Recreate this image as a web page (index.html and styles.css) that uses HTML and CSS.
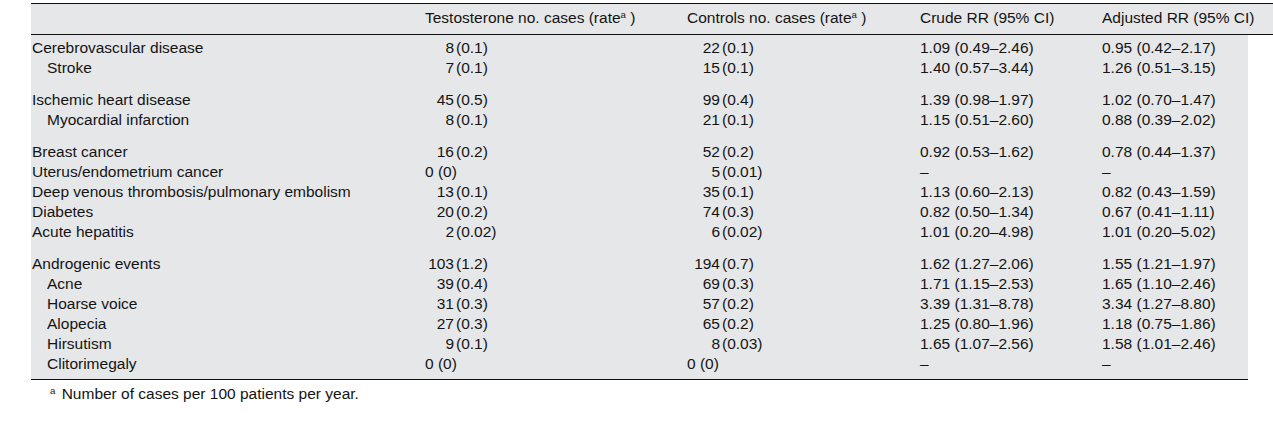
FILE: index.html
```html
<!DOCTYPE html>
<html lang="en">
<head>
<meta charset="utf-8">
<title>Adverse events table</title>
<link rel="stylesheet" href="styles.css">
</head>
<body>
<div class="wrap">
<table class="events">
  <colgroup>
    <col class="c-label">
    <col class="c-testo">
    <col class="c-ctrl">
    <col class="c-crude">
    <col class="c-adj">
    <col class="c-pad">
  </colgroup>
  <thead>
    <tr>
      <th></th>
      <th>Testosterone no. cases (rate<sup>a</sup> )</th>
      <th>Controls no. cases (rate<sup>a</sup> )</th>
      <th>Crude RR (95% CI)</th>
      <th>Adjusted RR (95% CI)</th>
      <th class="pad"></th>
    </tr>
  </thead>
  <tbody>
    <tr class="first">
      <td>Cerebrovascular disease</td>
      <td><span class="nt">8</span>(0.1)</td>
      <td><span class="nc">22</span>(0.1)</td>
      <td>1.09 (0.49–2.46)</td>
      <td>0.95 (0.42–2.17)</td>
      <td class="pad"></td>
    </tr>
    <tr>
      <td class="sub">Stroke</td>
      <td><span class="nt">7</span>(0.1)</td>
      <td><span class="nc">15</span>(0.1)</td>
      <td>1.40 (0.57–3.44)</td>
      <td>1.26 (0.51–3.15)</td>
      <td class="pad"></td>
    </tr>
    <tr class="gap">
      <td>Ischemic heart disease</td>
      <td><span class="nt">45</span>(0.5)</td>
      <td><span class="nc">99</span>(0.4)</td>
      <td>1.39 (0.98–1.97)</td>
      <td>1.02 (0.70–1.47)</td>
      <td class="pad"></td>
    </tr>
    <tr>
      <td class="sub">Myocardial infarction</td>
      <td><span class="nt">8</span>(0.1)</td>
      <td><span class="nc">21</span>(0.1)</td>
      <td>1.15 (0.51–2.60)</td>
      <td>0.88 (0.39–2.02)</td>
      <td class="pad"></td>
    </tr>
    <tr class="gap">
      <td>Breast cancer</td>
      <td><span class="nt">16</span>(0.2)</td>
      <td><span class="nc">52</span>(0.2)</td>
      <td>0.92 (0.53–1.62)</td>
      <td>0.78 (0.44–1.37)</td>
      <td class="pad"></td>
    </tr>
    <tr>
      <td>Uterus/endometrium cancer</td>
      <td>0 (0)</td>
      <td><span class="nc">5</span>(0.01)</td>
      <td>–</td>
      <td>–</td>
      <td class="pad"></td>
    </tr>
    <tr>
      <td>Deep venous thrombosis/pulmonary embolism</td>
      <td><span class="nt">13</span>(0.1)</td>
      <td><span class="nc">35</span>(0.1)</td>
      <td>1.13 (0.60–2.13)</td>
      <td>0.82 (0.43–1.59)</td>
      <td class="pad"></td>
    </tr>
    <tr>
      <td>Diabetes</td>
      <td><span class="nt">20</span>(0.2)</td>
      <td><span class="nc">74</span>(0.3)</td>
      <td>0.82 (0.50–1.34)</td>
      <td>0.67 (0.41–1.11)</td>
      <td class="pad"></td>
    </tr>
    <tr>
      <td>Acute hepatitis</td>
      <td><span class="nt">2</span>(0.02)</td>
      <td><span class="nc">6</span>(0.02)</td>
      <td>1.01 (0.20–4.98)</td>
      <td>1.01 (0.20–5.02)</td>
      <td class="pad"></td>
    </tr>
    <tr class="gap">
      <td>Androgenic events</td>
      <td><span class="nt">103</span>(1.2)</td>
      <td><span class="nc">194</span>(0.7)</td>
      <td>1.62 (1.27–2.06)</td>
      <td>1.55 (1.21–1.97)</td>
      <td class="pad"></td>
    </tr>
    <tr>
      <td class="sub">Acne</td>
      <td><span class="nt">39</span>(0.4)</td>
      <td><span class="nc">69</span>(0.3)</td>
      <td>1.71 (1.15–2.53)</td>
      <td>1.65 (1.10–2.46)</td>
      <td class="pad"></td>
    </tr>
    <tr>
      <td class="sub">Hoarse voice</td>
      <td><span class="nt">31</span>(0.3)</td>
      <td><span class="nc">57</span>(0.2)</td>
      <td>3.39 (1.31–8.78)</td>
      <td>3.34 (1.27–8.80)</td>
      <td class="pad"></td>
    </tr>
    <tr>
      <td class="sub">Alopecia</td>
      <td><span class="nt">27</span>(0.3)</td>
      <td><span class="nc">65</span>(0.2)</td>
      <td>1.25 (0.80–1.96)</td>
      <td>1.18 (0.75–1.86)</td>
      <td class="pad"></td>
    </tr>
    <tr>
      <td class="sub">Hirsutism</td>
      <td><span class="nt">9</span>(0.1)</td>
      <td><span class="nc">8</span>(0.03)</td>
      <td>1.65 (1.07–2.56)</td>
      <td>1.58 (1.01–2.46)</td>
      <td class="pad"></td>
    </tr>
    <tr class="last">
      <td class="sub">Clitorimegaly</td>
      <td>0 (0)</td>
      <td>0 (0)</td>
      <td>–</td>
      <td>–</td>
      <td class="pad"></td>
    </tr>
  </tbody>
</table>
<p class="foot"><sup>a</sup> Number of cases per 100 patients per year.</p>
</div>
</body>
</html>
```

FILE: styles.css
```css
html, body {
  margin: 0;
  padding: 0;
  background: #ffffff;
}

body {
  font-family: "Liberation Sans", Arial, sans-serif;
  font-size: 15.5px;
  color: #141414;
  overflow: hidden;
}

.wrap {
  padding: 3px 0 0 31px;
}

.events {
  border-collapse: collapse;
  table-layout: fixed;
  width: 1242px;
}

.c-label { width: 393px; }
.c-testo { width: 262px; }
.c-ctrl  { width: 233px; }
.c-crude { width: 182px; }
.c-adj   { width: 147px; }
.c-pad   { width: 25px; }

.events th,
.events td {
  padding: 0 0 0 1px;
  text-align: left;
  white-space: nowrap;
  line-height: 20px;
  vertical-align: middle;
}

.events thead th {
  background: #e6e7e9;
  font-weight: normal;
  height: 28px;
  padding-bottom: 2px;
  border-top: 1px solid #111;
  border-bottom: 1px solid #111;
}

.events tbody td {
  background: #e6e7e9;
}

.events tbody td.pad {
  background: #ffffff;
}

.events tbody td.sub {
  padding-left: 16px;
}

.events tr.first td { padding-top: 3px; }
.events tr.gap td { padding-top: 12px; }
.events tr.last td { padding-bottom: 5px; border-bottom: 1px solid #111; }
.events tr.last td.pad { border-bottom: none; }

sup {
  font-size: 0.62em;
  line-height: 0;
  vertical-align: 0.5em;
}

.nt,
.nc {
  display: inline-block;
  text-align: right;
  margin-right: 2px;
}

.nt { width: 29px; }
.nc { width: 33px; }

.foot {
  margin: 4px 0 0 19px;
  line-height: 20px;
}

.foot sup {
  margin-right: 2px;
}
```
